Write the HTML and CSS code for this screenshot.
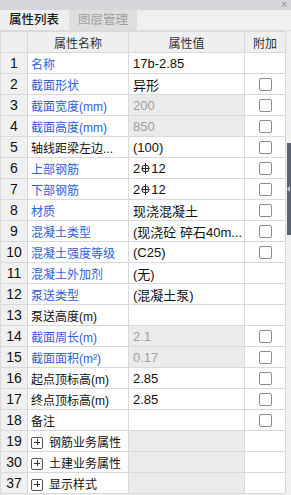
FILE: index.html
```html
<!DOCTYPE html>
<html lang="zh-CN">
<head>
    <meta charset="UTF-8">
    <title>属性列表</title>
    <link rel="stylesheet" href="styles.css">
</head>
<body>
<div class="panel">
    <div class="titlebar"><span class="close">×</span></div>
    <div class="tabs">
        <div class="tab active">属性列表</div>
        <div class="tab">图层管理</div>
    </div>
    <div class="main">
        <table class="grid">
            <colgroup>
                <col class="c-no">
                <col class="c-name">
                <col class="c-val">
                <col class="c-add">
            </colgroup>
            <tr class="head">
                <th></th>
                <th>属性名称</th>
                <th>属性值</th>
                <th>附加</th>
            </tr>
            <tr><td class="no">1</td><td class="name blue">名称</td><td class="val">17b-2.85</td><td class="add"></td></tr>
            <tr><td class="no">2</td><td class="name blue">截面形状</td><td class="val">异形</td><td class="add"><i class="chk"></i></td></tr>
            <tr><td class="no">3</td><td class="name blue">截面宽度(mm)</td><td class="val off">200</td><td class="add"><i class="chk"></i></td></tr>
            <tr><td class="no">4</td><td class="name blue">截面高度(mm)</td><td class="val off">850</td><td class="add"><i class="chk"></i></td></tr>
            <tr><td class="no">5</td><td class="name">轴线距梁左边...</td><td class="val">(100)</td><td class="add"><i class="chk"></i></td></tr>
            <tr><td class="no">6</td><td class="name blue">上部钢筋</td><td class="val">2<svg class="steel" viewBox="0 0 9 12"><ellipse cx="4.5" cy="6.5" rx="3.6" ry="3.4"/><path d="M4.5 1v11M0.8 6.5h7.4"/></svg>12</td><td class="add"><i class="chk"></i></td></tr>
            <tr><td class="no">7</td><td class="name blue">下部钢筋</td><td class="val">2<svg class="steel" viewBox="0 0 9 12"><ellipse cx="4.5" cy="6.5" rx="3.6" ry="3.4"/><path d="M4.5 1v11M0.8 6.5h7.4"/></svg>12</td><td class="add"><i class="chk"></i></td></tr>
            <tr><td class="no">8</td><td class="name blue">材质</td><td class="val">现浇混凝土</td><td class="add"><i class="chk"></i></td></tr>
            <tr><td class="no">9</td><td class="name blue">混凝土类型</td><td class="val">(现浇砼 碎石40m...</td><td class="add"><i class="chk"></i></td></tr>
            <tr><td class="no">10</td><td class="name blue">混凝土强度等级</td><td class="val">(C25)</td><td class="add"><i class="chk"></i></td></tr>
            <tr><td class="no">11</td><td class="name blue">混凝土外加剂</td><td class="val">(无)</td><td class="add"></td></tr>
            <tr><td class="no">12</td><td class="name blue">泵送类型</td><td class="val">(混凝土泵)</td><td class="add"></td></tr>
            <tr><td class="no">13</td><td class="name">泵送高度(m)</td><td class="val"></td><td class="add"></td></tr>
            <tr><td class="no">14</td><td class="name blue">截面周长(m)</td><td class="val off">2.1</td><td class="add"><i class="chk"></i></td></tr>
            <tr><td class="no">15</td><td class="name blue">截面面积(m²)</td><td class="val off">0.17</td><td class="add"><i class="chk"></i></td></tr>
            <tr><td class="no">16</td><td class="name">起点顶标高(m)</td><td class="val">2.85</td><td class="add"><i class="chk"></i></td></tr>
            <tr><td class="no">17</td><td class="name">终点顶标高(m)</td><td class="val">2.85</td><td class="add"><i class="chk"></i></td></tr>
            <tr><td class="no">18</td><td class="name">备注</td><td class="val"></td><td class="add"><i class="chk"></i></td></tr>
            <tr><td class="no">19</td><td class="name group"><i class="plus"></i>钢筋业务属性</td><td class="val off"></td><td class="add"></td></tr>
            <tr><td class="no">30</td><td class="name group"><i class="plus"></i>土建业务属性</td><td class="val off"></td><td class="add"></td></tr>
            <tr><td class="no">37</td><td class="name group"><i class="plus"></i>显示样式</td><td class="val off"></td><td class="add"></td></tr>
        </table>
        <div class="side">
            <div class="handle"><span class="arrow"></span></div>
        </div>
    </div>
</div>
</body>
</html>
```

FILE: styles.css
```css
*{margin: 0;padding: 0;box-sizing: border-box;}
body{
    background: #f0f0f0;
    font-family: "Liberation Sans", "Noto Sans CJK SC", sans-serif;
    font-size: 12px;
    color: #111;
}
.panel{
    width: 291px;
    height: 495px;
    display: flex;
    flex-direction: column;
    overflow: hidden;
}
.titlebar{
    height: 10px;
    background: #d5d6db;
    display: flex;
    justify-content: flex-end;
    align-items: center;
}
.close{
    font-size: 10px;
    line-height: 10px;
    color: #8a8a8a;
    padding-right: 4px;
}
.tabs{
    height: 21px;
    display: flex;
    background: #f0f0f0;
    border-bottom: 1px solid #dcdcdc;
}
.tab{
    width: 68px;
    line-height: 20px;
    font-size: 12.5px;
    text-align: center;
    color: #a0a0a0;
    background: #dedede;
    margin-right: 1px;
}
.tab.active{
    color: #1a1a1a;
    background: #efefef;
    font-weight: 500;
}
.main{
    display: flex;
    flex: 1;
}
/* 属性表格 */
.grid{
    width: 285px;
    table-layout: fixed;
    border-collapse: collapse;
    background: #fff;
    align-self: flex-start;
    font-size: 12px;
}
.c-no{width: 27px;}
.c-name{width: 101px;}
.c-val{width: 116px;}
.c-add{width: 41px;}
.grid td, .grid th{
    height: 21px;
    border: 1px solid #d9d9d9;
    white-space: nowrap;
    overflow: hidden;
    padding: 0 3px;
    font-size: 12px;
}
.grid th{
    font-weight: normal;
    font-size: 12px;
    color: #333;
    background: #efefef;
    text-align: center;
}
.grid .no{
    background: #f0f0f0;
    text-align: center;
    font-size: 14px;
    padding: 0;
}
.grid .name{padding-left: 3px;font-size: 12px;}
.grid .blue{color: #3060d8;}
.grid .val{padding-left: 4px;font-size: 13px;}
.grid .off{
    background: #ebebeb;
    color: #a0a0a0;
}
.grid .add{text-align: center;}
.chk{
    display: inline-block;
    width: 13px;
    height: 13px;
    border: 1px solid #8c8c8c;
    border-radius: 2px;
    vertical-align: middle;
    background: #fff;
}
.steel{
    width: 9px;
    height: 12px;
    fill: none;
    stroke: #222;
    stroke-width: 1;
    vertical-align: -1px;
    margin: 0 1px;
}
.grid .group{font-size: 12px;}
.plus{
    display: inline-block;
    position: relative;
    width: 12px;
    height: 12px;
    border: 1px solid #555;
    border-radius: 2px;
    vertical-align: -2px;
    margin: 0 6px 0 0;
}
.plus::before, .plus::after{
    content: "";
    position: absolute;
    background: #333;
}
.plus::before{left: 2px;top: 4px;width: 6px;height: 1px;}
.plus::after{left: 4.5px;top: 1.5px;width: 1px;height: 6px;}
/* 右侧折叠条 */
.side{
    flex: 1;
    padding-top: 112px;
    display: flex;
    justify-content: flex-end;
}
.handle{
    width: 4px;
    height: 92px;
    background: #5b6270;
    display: flex;
    align-items: center;
}
.arrow{
    width: 0;
    height: 0;
    border-top: 3px solid transparent;
    border-bottom: 3px solid transparent;
    border-right: 3px solid #c8ccd4;
}
```
